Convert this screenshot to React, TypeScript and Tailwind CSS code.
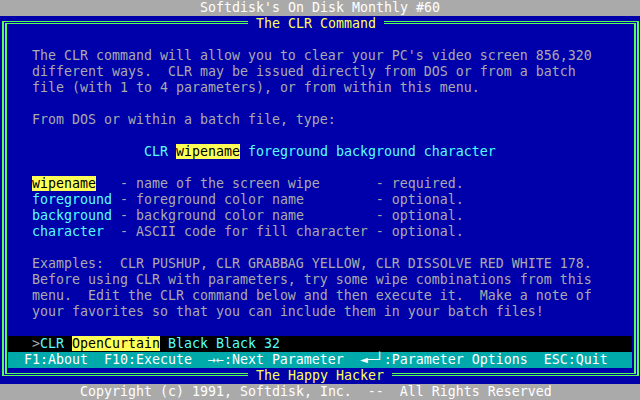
import React from 'react'

// 80x25 text screen, every cell 8x16
function Row({ children, className = '' }: { children?: React.ReactNode; className?: string }) {
  return <div className={`h-4 whitespace-pre ${className}`}>{children}</div>
}

function Hi({ children }: { children: React.ReactNode }) {
  return <span className="bg-[#ffff55] text-black">{children}</span>
}

const params = [
  { name: 'wipename', hi: true, gap: '   ', desc: 'name of the screen wipe', pad: '       ', note: 'required.' },
  { name: 'foreground', hi: false, gap: ' ', desc: 'foreground color name', pad: '         ', note: 'optional.' },
  { name: 'background', hi: false, gap: ' ', desc: 'background color name', pad: '         ', note: 'optional.' },
  { name: 'character', hi: false, gap: '  ', desc: 'ASCII code for fill character', pad: ' ', note: 'optional.' },
]

export default function App() {
  return (
    <div className="w-[640px] h-[400px] overflow-hidden bg-[#0000aa] font-['DejaVu_Sans_Mono',monospace] text-[13.29px] leading-4">
      <Row className="bg-[#aaaaaa] text-white text-center">Softdisk's On Disk Monthly #60</Row>

      <div className="relative h-[368px] pt-[5px]">
        <div className="ml-[2px] mr-px border-x-2 border-y border-[#55ff55] p-px">
          <div className="border-x-2 border-y border-[#55ff55] pl-px pr-[2px] pt-2 pb-[5px] text-[#aaaaaa]">
            <div className="pl-6">
              <Row />
              <Row>The CLR command will allow you to clear your PC's video screen 856,320</Row>
              <Row>different ways.  CLR may be issued directly from DOS or from a batch</Row>
              <Row>file (with 1 to 4 parameters), or from within this menu.</Row>
              <Row />
              <Row>From DOS or within a batch file, type:</Row>
              <Row />
            </div>
            <Row className="pl-[136px] text-[#55ffff]">
              CLR <Hi>wipename</Hi> foreground background character
            </Row>
            <Row />
            <div className="pl-6">
              {params.map((p) => (
                <Row key={p.name}>
                  {p.hi ? <Hi>{p.name}</Hi> : <span className="text-[#55ffff]">{p.name}</span>}
                  {`${p.gap}- ${p.desc}${p.pad}- ${p.note}`}
                </Row>
              ))}
              <Row />
              <Row>Examples:  CLR PUSHUP, CLR GRABBAG YELLOW, CLR DISSOLVE RED WHITE 178.</Row>
              <Row>Before using CLR with parameters, try some wipe combinations from this</Row>
              <Row>menu.  Edit the CLR command below and then execute it.  Make a note of</Row>
              <Row>your favorites so that you can include them in your batch files!</Row>
              <Row />
            </div>
            <Row className="bg-black pl-6 text-[#55ffff]">
              <span className="text-[#aaaaaa]">&gt;</span>CLR <Hi>OpenCurtain</Hi> Black Black 32
            </Row>
            <Row className="bg-[#00aaaa] pl-4 text-white">
              {'F1:About  F10:Execute  →←:Next Parameter  ◄─┘:Parameter Options  ESC:Quit'}
            </Row>
          </div>
        </div>

        <div className="absolute top-0 left-[248px] h-4 px-2 bg-[#0000aa] text-[#ffff55] whitespace-pre">The CLR Command</div>
        <div className="absolute top-[352px] left-[248px] h-4 px-2 bg-[#0000aa] text-[#ffff55] whitespace-pre">The Happy Hacker</div>
      </div>

      <Row className="bg-[#aaaaaa] text-white pl-20">Copyright (c) 1991, Softdisk, Inc.  --  All Rights Reserved</Row>
    </div>
  )
}
